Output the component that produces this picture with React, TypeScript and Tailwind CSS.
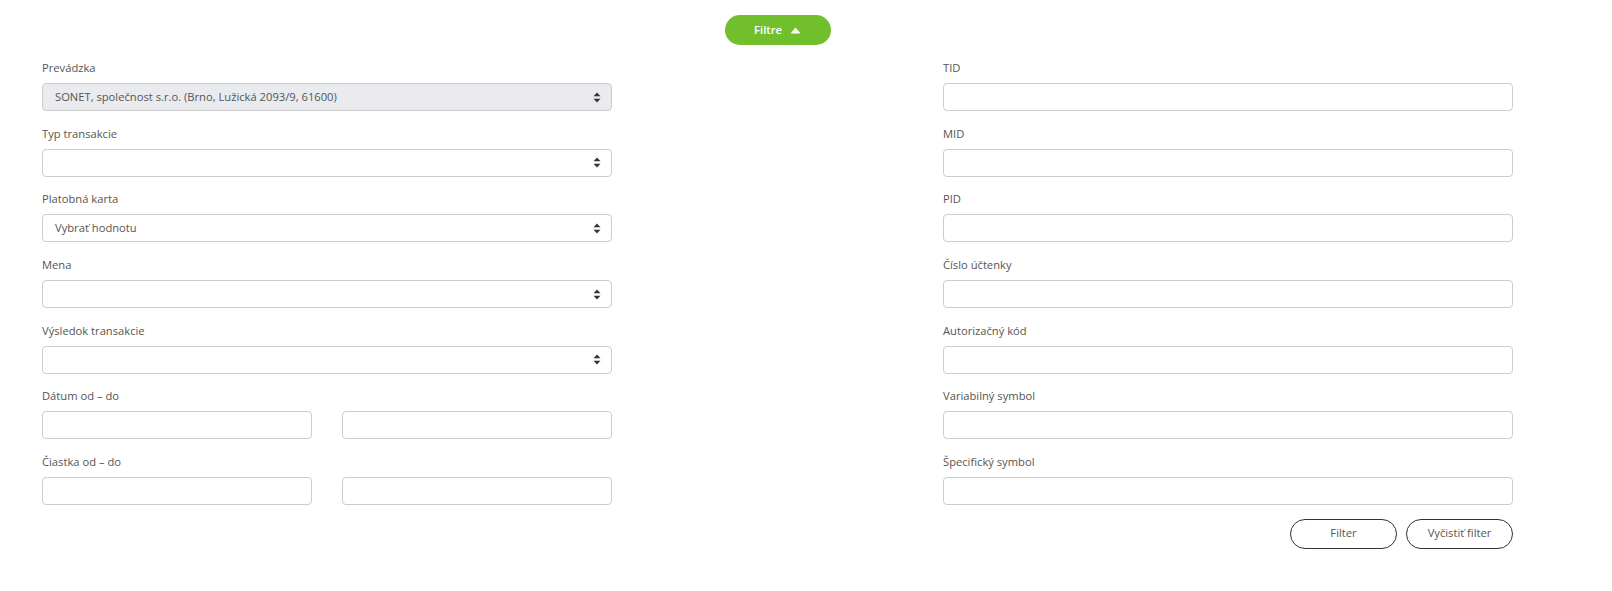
import React from "react";

const FONT = { fontFamily: '"Open Sans", "Noto Sans", sans-serif' };

function SortIcon() {
  return (
    <svg width="8" height="11" viewBox="0 0 8 11" className="text-[#333]">
      <path d="M4 0.5 L7.5 4.3 L0.5 4.3 Z" fill="currentColor" />
      <path d="M4 10.5 L7.5 6.7 L0.5 6.7 Z" fill="currentColor" />
    </svg>
  );
}

function Label({ children }: { children: React.ReactNode }) {
  return <div className="h-[18px] mb-[6px] text-[11.2px] leading-[18px] text-[#555]">{children}</div>;
}

function Select({ value, disabled }: { value?: string; disabled?: boolean }) {
  return (
    <div
      className={`h-[28px] rounded-[4px] border border-[#ccc] flex items-center justify-between pl-[12px] pr-[10px] text-[11.2px] text-[#555] ${
        disabled ? "bg-[#e9ebee]" : "bg-white"
      }`}
    >
      <span>{value ?? ""}</span>
      <SortIcon />
    </div>
  );
}

function Input() {
  return <div className="h-[28px] rounded-[4px] border border-[#ccc] bg-white" />;
}

function Field({ label, children }: { label: string; children: React.ReactNode }) {
  return (
    <div className="mb-[13.7px]">
      <Label>{label}</Label>
      {children}
    </div>
  );
}

export default function App() {
  const right = ["TID", "MID", "PID", "Číslo účtenky", "Autorizačný kód", "Variabilný symbol", "Špecifický symbol"];
  return (
    <div className="w-full bg-white pl-[42px] pb-[20px]" style={FONT}>
      <div className="w-[1471px]">
        <div className="flex justify-center pt-[15px] pb-[14px]">
          <button className="w-[106px] h-[30px] rounded-full bg-[#72bf2d] text-white text-[11.2px] font-semibold flex items-center justify-center gap-[8px]">
            Filtre
            <svg width="11" height="7" viewBox="0 0 11 7">
              <path d="M5.5 0.5 L10.5 6.5 L0.5 6.5 Z" fill="white" />
            </svg>
          </button>
        </div>
        <div className="flex justify-between">
          <div className="w-[570px]">
            <Field label="Prevádzka">
              <Select value="SONET, společnost s.r.o. (Brno, Lužická 2093/9, 61600)" disabled />
            </Field>
            <Field label="Typ transakcie">
              <Select />
            </Field>
            <Field label="Platobná karta">
              <Select value="Vybrať hodnotu" />
            </Field>
            <Field label="Mena">
              <Select />
            </Field>
            <Field label="Výsledok transakcie">
              <Select />
            </Field>
            <Field label="Dátum od – do">
              <div className="grid grid-cols-2 gap-[30px]">
                <Input />
                <Input />
              </div>
            </Field>
            <Field label="Čiastka od – do">
              <div className="grid grid-cols-2 gap-[30px]">
                <Input />
                <Input />
              </div>
            </Field>
          </div>
          <div className="w-[570px]">
            {right.map((l) => (
              <Field key={l} label={l}>
                <Input />
              </Field>
            ))}
            <div className="flex justify-end gap-[9px]">
              <button className="w-[107px] h-[30px] rounded-full border border-[#333] text-[11.2px] text-[#555] bg-white">
                Filter
              </button>
              <button className="w-[107px] h-[30px] rounded-full border border-[#333] text-[11.2px] text-[#555] bg-white">
                Vyčistiť filter
              </button>
            </div>
          </div>
        </div>
      </div>
    </div>
  );
}
